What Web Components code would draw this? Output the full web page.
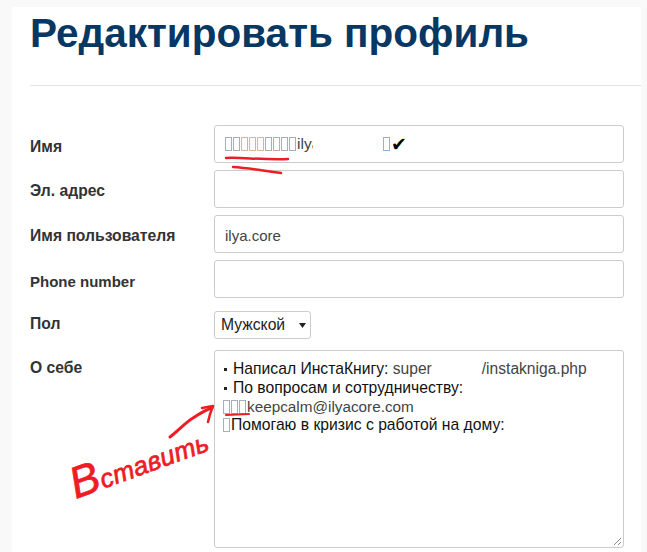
<!DOCTYPE html>
<html lang="ru"><head><meta charset="utf-8">
<style>
html,body{margin:0;padding:0;background:#f9f9f9;height:552px;overflow:hidden}
body{font-family:"Liberation Sans",Arial,sans-serif}
</style></head><body>
<template id="t-panel"><style>
:host{display:block;position:relative;margin:7px 0 0 12px;width:629px;height:545px;background:#fff;box-sizing:border-box;padding:0 0 0 18px;overflow:visible}
</style><slot></slot></template>

<template id="t-head"><style>
:host{display:block;height:78px;border-bottom:1px solid #e3e3e3;margin-bottom:39px;color:#073763}
h1{margin:0;font:bold 40.5px/50px "Liberation Sans",Arial,sans-serif;padding-top:1px}
</style><h1><slot></slot></h1></template>

<template id="t-form"><style>
:host{display:flex;flex-direction:column;gap:7px}
</style><slot></slot></template>

<template id="t-row"><style>
:host{display:grid;grid-template-columns:184px 410px;align-items:start}
.l{font-weight:bold;color:#333;font-size:var(--ls,15.7px);line-height:17px;padding-top:var(--lt,12px)}
</style><div class="l"><slot name="label"></slot></div><div class="c"><slot></slot></div></template>

<template id="t-input"><style>
:host{display:flex;align-items:center;box-sizing:border-box;height:38px;border:1px solid #ccc;border-radius:3px;padding:0 10px;background:#fff;color:#444;font-size:15px;white-space:nowrap;overflow:hidden}
</style><slot></slot></template>

<template id="t-select"><style>
:host{display:inline-flex;align-items:center;box-sizing:border-box;width:97px;height:28px;border:1px solid #ccc;border-radius:3px;padding:0 0 0 6px;background:#fff;color:#222;font-size:15.7px;justify-content:space-between;margin-top:6px}
svg{margin-right:4px}
</style><slot></slot><svg width="7" height="5" viewBox="0 0 7 5"><path d="M0 0H7L3.5 5Z" fill="#222"/></svg></template>

<template id="t-area"><style>
:host{display:block;position:relative;box-sizing:border-box;height:198px;border:1px solid #ccc;border-radius:3px;padding:9px 8px;background:#fff;color:#111;font-size:15.7px;line-height:18.8px;white-space:nowrap;overflow:hidden;margin-top:4px}
svg{position:absolute;right:1px;bottom:1px}
</style><slot></slot><svg width="9" height="9" viewBox="0 0 9 9"><path d="M1 8L8 1M5 8L8 5" stroke="#888" fill="none"/></svg></template>

<template id="t-tofu"><style>
:host{display:inline-block;box-sizing:border-box;width:7px;height:14px;border:1px solid var(--c,#a9afb8);margin-right:1px;vertical-align:-2px;background:#fff}
</style></template>

<template id="t-bullet"><style>
:host{display:inline-block;width:10px;height:10px;position:relative}
i{position:absolute;left:1px;top:4px;width:3px;height:3px;background:#222}
</style><i></i></template>

<template id="t-ink"><style>
:host{display:block;position:absolute;left:-12px;top:-7px;width:647px;height:552px;pointer-events:none}
svg{position:absolute;left:0;top:0}
.w{position:absolute;left:75px;top:462px;color:#ee1c25;font:italic 26px/44px "Liberation Sans",sans-serif;-webkit-text-stroke:.7px #ee1c25;letter-spacing:.3px;white-space:nowrap;transform:rotate(-20deg);transform-origin:0 70%}
.w::first-letter{font-size:44px}
</style><svg width="647" height="552" fill="none" stroke="#ee1c25" stroke-linecap="round" stroke-linejoin="round">
<path d="M226 158C240 157 262 160 288 159" stroke-width="2.5"/>
<path d="M233 167C250 168 264 171 281 173" stroke-width="2.5"/>
<path d="M226 415L249 414" stroke-width="2"/>
<path d="M170 437C178 431 186 422 193 418C199 414 205 410 212 408" stroke-width="3"/>
<path d="M202 408L213 406C211 411 209 417 208 422" stroke-width="2.5"/>
</svg><div class="w">Вставить</div></template>

<x-panel>
<x-head>Редактировать профиль</x-head>
<x-form>
<x-row style="--lt:13px"><span slot="label">Имя</span><x-input><x-tofu></x-tofu><x-tofu></x-tofu><x-tofu style="--c:#c9b7a8"></x-tofu><x-tofu style="--c:#d9b98c"></x-tofu><x-tofu style="--c:#d9b98c"></x-tofu><x-tofu style="--c:#a9afb8"></x-tofu><x-tofu style="--c:#dca0a0"></x-tofu><x-tofu></x-tofu><x-tofu></x-tofu><span style="display:inline-block;width:16px;overflow:hidden;font-size:15.5px">ilya</span><span style="width:70px"></span><x-tofu style="--c:#8db4dd"></x-tofu><span style="color:#000;font-family:'DejaVu Sans';font-size:19px;line-height:20px;font-weight:bold">✔</span></x-input></x-row>
<x-row><span slot="label">Эл. адрес</span><x-input></x-input></x-row>
<x-row><span slot="label">Имя пользователя</span><x-input><span style="padding-top:2px">ilya.core</span></x-input></x-row>
<x-row style="--ls:15px;--lt:13px"><span slot="label">Phone number</span><x-input></x-input></x-row>
<x-row style="--lt:10px"><span slot="label">Пол</span><x-select>Мужской</x-select></x-row>
<x-row style="--lt:13px"><span slot="label">О себе</span><x-area>
<div><x-bullet></x-bullet>Написал ИнстаКнигу: <span style="color:#444;font-size:15.6px">super<span style="display:inline-block;width:50px"></span>/instakniga.php</span></div>
<div><x-bullet></x-bullet>По вопросам и сотрудничеству:</div>
<div><x-tofu></x-tofu><x-tofu></x-tofu><x-tofu></x-tofu><span style="color:#444;font-size:15.3px">keepcalm@ilyacore.com</span></div>
<div><x-tofu></x-tofu>Помогаю в кризис с работой на дому:</div>
</x-area></x-row>
</x-form>
<x-ink></x-ink>
</x-panel>
<script>
for(const [n,id] of [['x-panel','t-panel'],['x-head','t-head'],['x-form','t-form'],['x-row','t-row'],['x-input','t-input'],['x-select','t-select'],['x-area','t-area'],['x-tofu','t-tofu'],['x-bullet','t-bullet'],['x-ink','t-ink']]){
 customElements.define(n,class extends HTMLElement{constructor(){super();this.attachShadow({mode:'open'}).appendChild(document.getElementById(id).content.cloneNode(true));}});
}
</script>
</body></html>
